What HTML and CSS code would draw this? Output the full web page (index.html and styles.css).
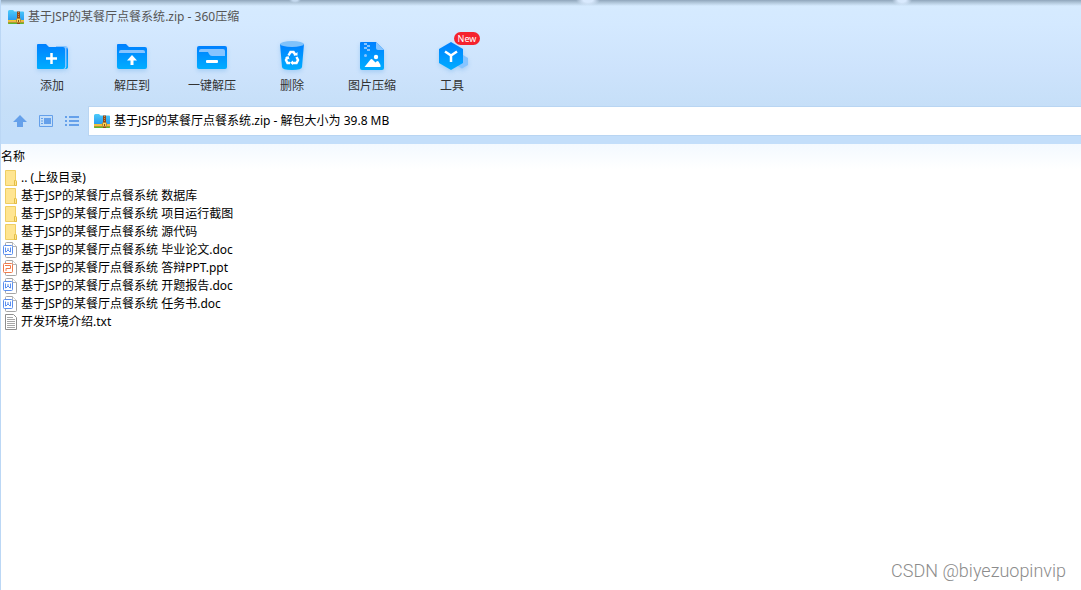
FILE: index.html
```html
<!DOCTYPE html>
<html lang="zh-CN">
<head>
<meta charset="utf-8">
<title>基于JSP的某餐厅点餐系统.zip - 360压缩</title>
<link rel="stylesheet" href="styles.css">
</head>
<body>
<svg class="defs" aria-hidden="true">
  <defs>
    <linearGradient id="blue" x1="0" y1="0" x2="0" y2="1"><stop offset="0" stop-color="#0080ff"/><stop offset="1" stop-color="#00adff"/></linearGradient>
    <linearGradient id="sky" x1="0" y1="0" x2="0" y2="1"><stop offset="0" stop-color="#4ccbfa"/><stop offset="1" stop-color="#2a9cf0"/></linearGradient>
    <symbol id="zip" viewBox="0 0 16 14">
      <path d="M0 1.500Q0 0 1.500 0H5l1.500 1.500H15q1 0 1 1V10H0z" fill="url(#sky)"/>
      <path d="M0 10h16v1.500H0z" fill="#f4c52c"/>
      <path d="M0 11.500h16V13q0 1-1 1H1q-1 0-1-1z" fill="#f08a1c"/>
      <path d="M0 12.500h16V13q0 1-1 1H1q-1 0-1-1z" fill="#5cb531"/>
      <path d="M9 1.500h3V14H9z" fill="#8f4a1b"/>
      <path d="M10.500 2v7" stroke="#d08c4a" stroke-dasharray="1 1"/>
      <rect x="8.500" y="8.500" width="4" height="4" rx="1" fill="#f8d45b" stroke="#b9822a"/>
      <path d="M10 10h1v2h-1z" fill="#81501a"/>
    </symbol>
    <symbol id="folder" viewBox="0 0 14 18">
      <path d="M1.500 1.500h10V11l1 1v4.500h-11z" fill="#ffe591" stroke="#efce63"/>
      <path d="M10.500 16.500V11.500h1l1 1v4z" fill="#ffe591" stroke="#e3bc45"/>
    </symbol>
    <symbol id="page" viewBox="0 0 14 16">
      <path d="M2.500 3V1.500q0-1 1-1H9.500l4 4v10q0 1-1 1h-9q-1 0-1-1V13" fill="#fff" stroke="#a5a5a5"/>
      <path d="M9.500 .5v4h4" fill="#fff" stroke="#b5b5b5"/>
    </symbol>
    <symbol id="doc" viewBox="0 0 14 16">
      <use href="#page"/>
      <rect x=".5" y="3.500" width="9" height="9" rx="1" fill="#fff" stroke="#5b8fee"/>
      <path d="M2.500 5.500v4.500h.5l2-2 2 2h.5V5.500M5 6v2" fill="none" stroke="#5b8fee"/>
    </symbol>
    <symbol id="ppt" viewBox="0 0 14 16">
      <use href="#page"/>
      <rect x=".5" y="3.500" width="9" height="9" rx="1" fill="#fff" stroke="#f07a4a"/>
      <path d="M2 5.500h5.500v3H3V11" fill="none" stroke="#f07a4a"/>
    </symbol>
    <symbol id="txt" viewBox="0 0 14 16">
      <path d="M2.500 .5h8l3 3v12h-11z" fill="#fff" stroke="#8e8e8e"/>
      <path d="M4 3.500h6M4 5.500h8M4 7.500h8M4 9.500h8M4 11.500h8M4 13.500h8" stroke="#a6a6a6"/>
    </symbol>
  </defs>
</svg>
<div class="window">
  <header class="chrome">
    <h1 class="title"><svg class="zip-icon"><use href="#zip"/></svg>基于JSP的某餐厅点餐系统.zip - 360压缩</h1>
    <nav class="toolbar">
      <button class="tool" type="button">
        <svg class="tool-icon" viewBox="0 0 32 32"><path d="M20 6h9q3 0 3 3v16q0 2-2 2H20z" fill="#86c4ff"/><path d="M1 5q0-1 1-1h8l3 3h14q2 0 2 2v18q0 2-2 2H2q-1 0-1-1z" fill="url(#blue)"/><path d="M30.500 8q1.500 0 1.500 2v17q0 2-3 2 1-1 1.500-3z" fill="url(#blue)"/><path d="M15.500 13v11M10 18.500h11" stroke="#fff" stroke-width="2.500"/></svg>
        添加</button>
      <button class="tool" type="button">
        <svg class="tool-icon" viewBox="0 0 32 32"><path d="M1 5q0-1 1-1h8l3 3h16q2 0 2 2v18q0 2-2 2H3q-2 0-2-2z" fill="url(#blue)"/><path d="M3 13v-1q0-2 2-2h22q2 0 2 2v1z" fill="#86c4ff"/><path d="M16 15l5 5.500h-3.500V25h-3v-4.500H11z" fill="#fff"/></svg>
        解压到</button>
      <button class="tool" type="button">
        <svg class="tool-icon" viewBox="0 0 32 32"><rect x="1" y="6" width="30" height="23" rx="2" fill="url(#blue)"/><path d="M3 11q0-2 2-2h22q2 0 2 2v5H16q-2 0-3-2l-1-2H3z" fill="#86c4ff"/><rect x="10" y="20" width="12" height="3" rx="1" fill="#fff"/></svg>
        一键解压</button>
      <button class="tool" type="button">
        <svg class="tool-icon" viewBox="0 0 32 32"><path d="M4 4h24l-2 23q0 3-10 3T6 27z" fill="url(#blue)"/><ellipse cx="16" cy="4" rx="12" ry="3" fill="#80c2fb"/><g fill="none" stroke="#fff" stroke-width="2.500"><path d="M12.500 15.500l2-3.500h3l2 3"/><path d="M20.500 17l1.500 3-1.500 3h-4"/><path d="M14 23h-2.500L10 20l1.500-3"/></g><path d="M17.500 15.500h4V12zM17 20.500v4.500l-3-2.200zM9 17.500l3.500-1.500 1 3.500z" fill="#fff"/></svg>
        删除</button>
      <button class="tool" type="button">
        <svg class="tool-icon" viewBox="0 0 32 32"><path d="M5 2h15l8 8v18q0 2-2 2H6q-2 0-2-2V3q0-1 1-1z" fill="url(#blue)"/><path d="M20 2l8 8h-6q-2 0-2-2z" fill="#86c4ff"/><path d="M8 3h3v2H8zm3 2h3v2h-3zM8 7h3v2H8zm3 2h3v2h-3z" fill="#86c4ff"/><circle cx="9.500" cy="15.500" r="1.500" fill="#86c4ff"/><circle cx="20" cy="17" r="2.200" fill="#fff"/><path d="M8.500 27l6-7.500q1-1 2 0l3 3 1-1q1-1 2 0l2 3.500v2z" fill="#fff"/></svg>
        图片压缩</button>
      <button class="tool" type="button">
        <svg class="tool-icon" viewBox="0 0 32 32"><path d="M27 15l5 3v7l-6 3.500-6-3.500z" fill="#86c4ff"/><path d="M15 2l12 7v14l-12 7L3 23V9z" fill="url(#blue)"/><path d="M9 11.500l6 4 6-4M15 15.500V22" fill="none" stroke="#fff" stroke-width="2.500"/></svg>
        工具<span class="badge">New</span></button>
    </nav>
    <div class="location">
      <button class="nav-button" type="button" aria-label="上级目录"><svg viewBox="0 0 16 16"><path d="M8 2l7 7h-4v5H5V9H1z" fill="#65a0ea"/></svg></button>
      <button class="nav-button" type="button" aria-label="预览"><svg viewBox="0 0 16 16"><path d="M1.500 2.500h13v11h-13z" fill="none" stroke="#65a0ea"/><path d="M6 5h7v6H6zM3 5h2v1H3zm0 2.500h2v1H3zM3 10h2v1H3z" fill="#65a0ea"/></svg></button>
      <button class="nav-button" type="button" aria-label="列表"><svg viewBox="0 0 16 16"><path d="M1 3h2v2H1zm0 4h2v2H1zm0 4h2v2H1zM5 3h10v2H5zm0 4h10v2H5zm0 4h10v2H5z" fill="#65a0ea"/></svg></button>
      <label class="address"><svg class="zip-icon"><use href="#zip"/></svg><input class="address-input" type="text" aria-label="地址" readonly value="基于JSP的某餐厅点餐系统.zip - 解包大小为 39.8 MB"></label>
    </div>
  </header>
  <main class="content">
    <table class="files">
      <thead><tr><th>名称</th></tr></thead>
      <tbody>
        <tr><td><div class="file"><svg class="folder-icon"><use href="#folder"/></svg>.. (上级目录)</div></td></tr>
        <tr><td><div class="file"><svg class="folder-icon"><use href="#folder"/></svg>基于JSP的某餐厅点餐系统 数据库</div></td></tr>
        <tr><td><div class="file"><svg class="folder-icon"><use href="#folder"/></svg>基于JSP的某餐厅点餐系统 项目运行截图</div></td></tr>
        <tr><td><div class="file"><svg class="folder-icon"><use href="#folder"/></svg>基于JSP的某餐厅点餐系统 源代码</div></td></tr>
        <tr><td><div class="file"><svg class="file-icon"><use href="#doc"/></svg>基于JSP的某餐厅点餐系统 毕业论文.doc</div></td></tr>
        <tr><td><div class="file"><svg class="file-icon"><use href="#ppt"/></svg>基于JSP的某餐厅点餐系统 答辩PPT.ppt</div></td></tr>
        <tr><td><div class="file"><svg class="file-icon"><use href="#doc"/></svg>基于JSP的某餐厅点餐系统 开题报告.doc</div></td></tr>
        <tr><td><div class="file"><svg class="file-icon"><use href="#doc"/></svg>基于JSP的某餐厅点餐系统 任务书.doc</div></td></tr>
        <tr><td><div class="file"><svg class="file-icon"><use href="#txt"/></svg>开发环境介绍.txt</div></td></tr>
      </tbody>
    </table>
    <p class="watermark">CSDN @biyezuopinvip</p>
  </main>
</div>
</body>
</html>
```
FILE: styles.css
```css
* { box-sizing: border-box; }
body {
  margin: 0;
  background: #fff;
  color: #000;
  font: 12px/18px "Noto Sans", "Noto Sans CJK SC", sans-serif;
}
button, input { font: inherit; color: inherit; border: 0; background: none; padding: 0; margin: 0; }
svg { display: block; flex: none; }
.defs { position: absolute; width: 0; height: 0; }
.window { min-height: 100vh; display: flex; flex-direction: column; border-left: 1px solid #bbd7f5; }
.chrome {
  padding-bottom: 8px;
  background:
    radial-gradient(ellipse 6px 3px at 294px 0, #c4d9ef 40%, transparent),
    radial-gradient(ellipse 12px 6px at 587px 0, #d9eafe 40%, transparent),
    radial-gradient(ellipse 10px 6px at 901px 0, #d9eafe 40%, transparent),
    linear-gradient(#8fa5bb 0, #a9bfd3 2px, #d6eaff00 6px),
    linear-gradient(#d6ebff 0, #d4e9ff 25px, #cde3fc 70px, #c6dff8 106px, #c3defa 136px);
}
.title {
  display: flex;
  align-items: center;
  gap: 4px;
  height: 33px;
  margin: 0;
  padding-left: 7px;
  color: #555;
  font-size: 12px;
  font-weight: 400;
}
.zip-icon { width: 16px; height: 14px; }
.toolbar { display: flex; padding: 7px 11px 11px; }
.tool {
  position: relative;
  display: flex;
  flex-direction: column;
  align-items: center;
  gap: 5px;
  width: 80px;
  color: #333;
}
.tool-icon { width: 32px; height: 32px; filter: drop-shadow(0 2px 2px #68aeea66); }
.badge {
  position: absolute;
  top: -8px;
  left: 42px;
  width: 26px;
  height: 13px;
  border-radius: 7px;
  background: #f5222d;
  color: #fff;
  font-size: 9px;
  line-height: 13px;
}
.location { display: flex; align-items: center; gap: 10px; padding-left: 11px; }
.nav-button { width: 16px; height: 16px; }
.address {
  flex: 1;
  display: flex;
  align-items: center;
  gap: 4px;
  height: 30px;
  margin-left: -2px;
  padding-left: 5px;
  border: 1px solid #b9d5f2;
  border-right: 0;
  background: #fff;
}
.address-input { flex: 1; outline: 0; }
.content { position: relative; flex: 1; }
.files { width: 100%; border-collapse: collapse; }
.files th {
  height: 25px;
  padding: 0;
  background: linear-gradient(#f3f9ff, #fff);
  text-align: left;
  font-weight: 400;
}
.files td { padding: 0; }
.file { display: flex; align-items: center; gap: 4px; height: 18px; padding-left: 2px; line-height: 20px; }
.folder-icon { width: 14px; height: 18px; margin: 0 -1px 0 1px; }
.file-icon { width: 14px; height: 16px; }
.watermark {
  position: absolute;
  right: 15px;
  bottom: 8px;
  margin: 0;
  color: #8c8c8c;
  font: 300 18px/22px Roboto, "Liberation Sans", sans-serif;
}
```
